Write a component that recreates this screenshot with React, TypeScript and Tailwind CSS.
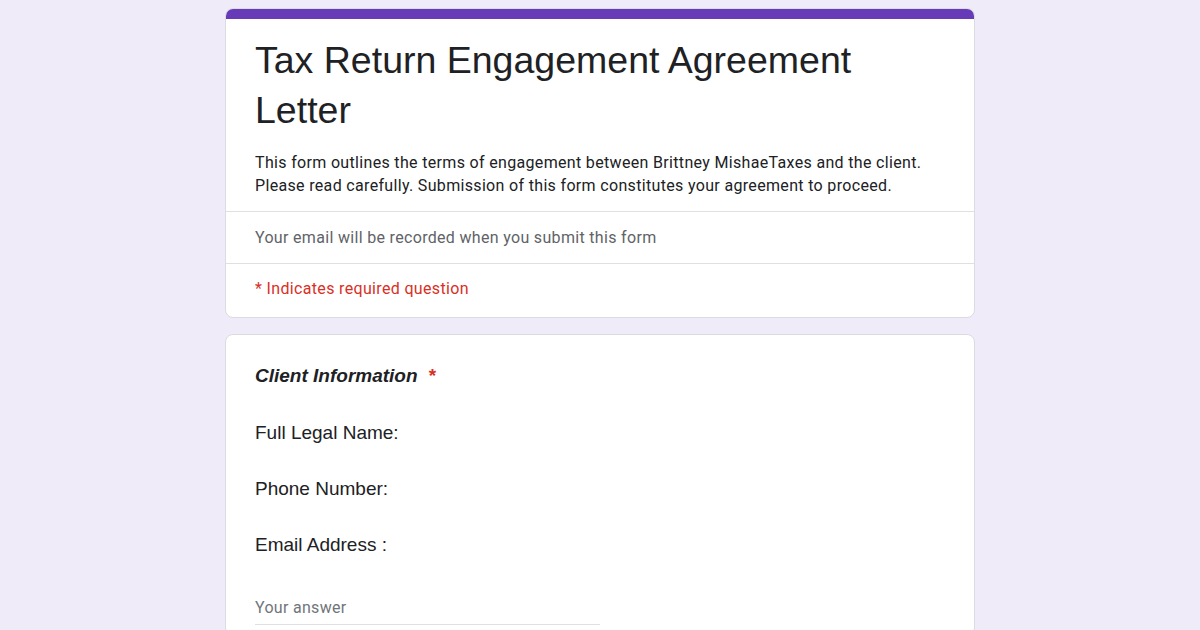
export default function App() {
  return (
    <div className="min-h-screen w-full bg-[#f0ebf8] pt-2 pb-8 font-['Roboto',sans-serif]">
      <div className="mx-auto flex w-[750px] flex-col gap-[16px]">
        {/* Header card */}
        <div className="overflow-hidden rounded-lg border border-[#dadce0] bg-white">
          <div className="h-[10px] bg-[#673ab7]" />
          <div className="px-[29px] pt-[16px] pb-[14px]">
            <h1 className="font-['Liberation_Sans',Arial,sans-serif] text-[37.5px] leading-[50px] text-[#202124]">
              Tax Return Engagement Agreement Letter
            </h1>
            <p className="mt-[16px] text-[16px] leading-[23px] tracking-[0.33px] text-[#202124]">
              This form outlines the terms of engagement between Brittney MishaeTaxes and the client.
              <br />
              Please read carefully. Submission of this form constitutes your agreement to proceed.
            </p>
          </div>
          <div className="border-t border-[#e0e0e0] px-[29px] pt-[14px] pb-[13px] text-[16px] leading-[24px] tracking-[0.32px] text-[#5f6368]">
            Your email will be recorded when you submit this form
          </div>
          <div className="border-t border-[#e0e0e0] px-[29px] pt-[13px] pb-[16px] text-[16px] leading-[24px] tracking-[0.34px] text-[#d93025]">
            * Indicates required question
          </div>
        </div>

        {/* Question card */}
        <div className="rounded-lg border border-[#dadce0] bg-white px-[29px] pt-[29px] pb-[10px]">
          <div className="font-['Liberation_Sans',Arial,sans-serif] text-[19px] leading-[24px] font-bold italic text-[#202124]">
            Client Information <span className="ml-[6px] not-italic text-[#d93025]">*</span>
          </div>
          <div className="mt-[31px] flex flex-col gap-[28px] font-['Liberation_Sans',Arial,sans-serif] text-[19px] leading-[28px] text-[#202124]">
            <div>Full Legal Name:</div>
            <div>Phone Number:</div>
            <div>Email Address :</div>
          </div>
          <div className="mt-[37px] w-[345px] border-b border-[#e0e0e0] pb-[4px] text-[16px] leading-[24px] tracking-[0.3px] text-[#70757a]">
            Your answer
          </div>
        </div>
      </div>
    </div>
  );
}
